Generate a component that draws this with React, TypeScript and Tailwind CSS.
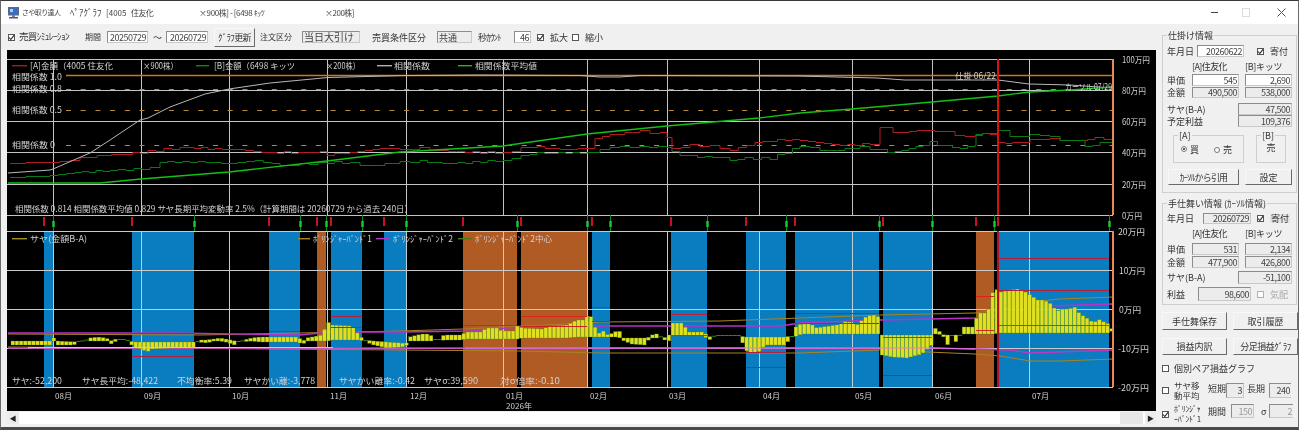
import React from "react";

type P = [number, number];
const grey: P[] = [[8,173],[50,170],[53,169],[90,153],[110,140],[140,120],[148,118],[170,107],[205,94],[229,89],[270,83],[328,77.5],[406,75.5],[480,75],[580,75.5],[600,77],[620,77],[640,75.5],[797,76],[877,78],[905,80],[998,80],[1029,84],[1070,85],[1113,88]];
const avg: P[] = [[8,183],[100,183],[141,179],[229,172],[327,161],[400,152],[503,146],[587,134],[667,126],[759,118],[800,113],[852,109],[932,102],[998,96],[1029,92],[1070,90],[1113,87]];
const redL: P[] = [[10,163],[50,162],[70,160],[90,156],[140,152],[180,147],[229,149],[270,152],[320,152],[327,154],[350,152],[380,148],[400,149],[420,148],[440,150],[465,152],[503,152],[530,146],[560,149],[587,148],[595,138],[610,134],[640,131],[660,133],[667,136],[672,148],[690,145],[710,146],[730,150],[755,142],[785,139],[800,140],[840,145],[870,143],[880,128],[893,132],[925,130],[945,132],[965,137],[975,135],[990,133],[998,143],[1020,142],[1040,138],[1060,140],[1080,140],[1095,137],[1113,141]];
const greenL: P[] = [[10,177],[50,175],[75,172],[110,170],[150,168],[160,162],[190,161],[229,163],[255,160],[280,165],[300,164],[327,162],[350,162],[370,166],[400,161],[420,161],[450,163],[503,160],[530,153],[587,152],[600,148],[620,146],[640,147],[667,146],[672,151],[680,155],[690,156],[720,157],[730,160],[745,158],[770,158],[800,146],[810,148],[830,150],[860,147],[880,150],[895,152],[930,142],[945,146],[960,148],[975,145],[976,134],[990,132],[998,131],[1010,136],[1030,135],[1040,134],[1060,140],[1080,140],[1085,146],[1100,143],[1113,150]];
const mUp: P[] = [[8,333],[175,333],[300,335],[330,332],[400,332],[470,331],[520,327],[585,325],[600,326],[700,326],[780,326],[800,323],[880,320],[930,319],[975,318],[998,315],[1030,310],[1050,306],[1113,304]];
const mLo: P[] = [[8,348],[400,348],[585,348],[800,348],[930,348],[975,349],[1010,350],[1030,353],[1113,350]];
const oUp: P[] = [[8,334],[200,335],[400,331],[463,329],[585,323],[600,322],[720,321],[800,318],[880,315],[975,313],[1000,310],[1030,302],[1060,299],[1113,297]];
const oLo: P[] = [[8,347],[400,350],[520,351],[600,353],[800,353],[880,350],[975,354],[1000,356],[1030,361],[1060,361],[1113,359]];
const center: P[] = [[28,347.5],[333,347.5]];
const center2: P[] = [[465,348],[585,348],[800,348],[930,348],[975,349]];

const blue = [[44,53],[132,194],[269,300],[331,362],[384,406],[592,610],[671,707],[746,786],[795,879],[883,932],[998,1109]];
const orange = [[317,326],[463,517],[521,587],[976,994]];
const ups = [44,132,269,317,331,384,463,521,592,671,746,795,883,976,998];
const downs = [53,194,300,326,362,406,517,587,610,707,786,879,932,994,1109];
const vgrid = [53,141,229,327,406,503,587,667,759,852,932,1029];
const steps: [number, number, number, string][] = [[132,194,333,"#b02038"],[132,194,356,"#b02038"],[269,300,331,"#b02038"],[331,362,316,"#b02038"],[331,362,327,"#c02030"],[463,517,325,"#e02020"],[521,587,316,"#e02020"],[521,587,326,"#d02020"],[592,610,307,"#c02030"],[592,610,321,"#c02030"],[671,707,314,"#c02030"],[671,707,335,"#d03020"],[746,786,367,"#b02038"],[746,786,352,"#b02038"],[795,879,313,"#b02038"],[795,879,323,"#c02030"],[883,932,337,"#d03020"],[883,932,375,"#a82038"],[976,994,296,"#e02020"],[976,994,330,"#e02020"],[998,1109,258,"#b02038"],[998,1109,290,"#b02038"],[998,1109,325,"#e03020"]];

const K: [number, number, number][] = [[11,341,345],[48,341,345],[52,338,341],[56,341,345],[72,342,345],[76,341,342],[84,340,341],[88,338,341],[96,337,341],[104,338,341],[108,340,341],[110,341,345],[114,339,341],[124,339,341],[128,341,343],[132,342,347],[140,342,349],[145,342,352],[150,342,349],[170,342,348],[192,342,347],[196,341,341],[198,340,342],[205,340,343],[212,339,341],[218,338,341],[224,339,342],[233,341,345],[238,341,342],[250,338,341],[258,337,342],[297,337,342],[300,342,345],[305,338,341],[320,335,341],[326,322,341],[330,325,340],[350,326,340],[357,335,340],[362,340,341],[372,341,345],[385,342,348],[400,343,347],[404,344,346],[408,337,341],[420,334,341],[428,334,341],[432,339,341],[438,339,341],[442,335,340],[460,335,340],[464,332,339],[480,332,339],[484,328,339],[495,328,339],[500,331,339],[512,331,339],[516,325,339],[520,328,338],[540,329,338],[550,326,338],[565,325,338],[575,320,337],[583,320,337],[587,312,337],[591,321,337],[596,335,337],[600,329,337],[604,335,337],[612,333,337],[617,329,337],[620,338,340],[630,338,344],[643,338,345],[648,337,338],[653,333,338],[660,337,338],[666,338,342],[671,323,336],[682,323,336],[685,332,336],[702,332,336],[707,337,340],[715,335,336],[737,335,336],[742,337,345],[746,337,353],[753,337,353],[758,337,351],[763,337,345],[783,337,345],[790,336,337],[795,325,336],[800,324,334],[810,324,334],[812,328,334],[820,327,334],[835,325,334],[845,321,334],[855,325,334],[865,316,334],[873,315,334],[877,317,334],[880,335,355],[890,335,357],[905,335,358],[920,335,354],[930,335,345],[933,328,334],[937,331,334],[942,335,337],[946,335,345],[950,335,336],[953,335,343],[958,335,336],[962,327,334],[972,327,334],[976,313,334],[986,313,334],[988,305,334],[992,288,334],[999,292,333],[1008,290,333],[1016,289,333],[1022,291,333],[1030,296,333],[1036,300,333],[1042,300,333],[1048,303,333],[1055,311,333],[1062,309,333],[1068,309,333],[1072,306,333],[1078,314,333],[1085,318,333],[1092,323,333],[1096,319,333],[1102,322,333],[1107,324,333],[1110,329,331]];

function interp(x: number) {
  for (let i = 0; i < K.length - 1; i++) {
    const a = K[i], b = K[i + 1];
    if (x >= a[0] && x <= b[0]) {
      const t = (x - a[0]) / (b[0] - a[0] || 1);
      return [a[1] + (b[1] - a[1]) * t, a[2] + (b[2] - a[2]) * t];
    }
  }
  return [340, 341];
}
const bars: { x: number; t: number; b: number }[] = [];
for (let x = 11; x < 1113; x += 4.1) {
  const [t, b] = interp(x);
  bars.push({ x, t, b });
}

const pts = (p: P[]) => p.map((q) => q.join(",")).join(" ");
function jag(p: P[], amp: number) {
  const out: P[] = [];
  for (let i = 0; i < p.length - 1; i++) {
    const [x0, y0] = p[i], [x1, y1] = p[i + 1];
    const n = Math.max(1, Math.floor((x1 - x0) / 7));
    for (let k = 0; k < n; k++) {
      const x = x0 + ((x1 - x0) * k) / n;
      const y = Math.round(y0 + ((y1 - y0) * k) / n + Math.sin(x * 0.37) * amp) + 0.5;
      out.push([x, y]);
      out.push([x + (x1 - x0) / n, y]);
    }
  }
  return out;
}

function L({ x, y, w, children, c = "#d2d2d2", s = 8.5 }: { x: number; y: number; w?: number; children: React.ReactNode; c?: string; s?: number }) {
  return (
    <text x={x} y={y} fill={c} fontSize={s} textLength={w} lengthAdjust={w ? "spacingAndGlyphs" : undefined} dominantBaseline="central">
      {children}
    </text>
  );
}

function Chart() {
  const hs = [59, 90, 121, 152, 184, 215];
  const ls = [231, 270, 309, 348, 387];
  return (
    <svg viewBox="7 50 1149 361" className="block h-[361px] w-[1149px] bg-black">
      {blue.map(([a, b]) => <rect key={a} x={a} y={231} width={b - a} height={156} fill="#0a7cc0" />)}
      {orange.map(([a, b]) => <rect key={a} x={a} y={231} width={b - a} height={156} fill="#b05a24" />)}
      {hs.map((y) => <line key={y} x1={7} x2={1113} y1={y + 0.5} y2={y + 0.5} stroke="#c4c4c4" strokeWidth={1} />)}
      {ls.map((y) => <line key={y} x1={7} x2={1113} y1={y + 0.5} y2={y + 0.5} stroke="#cacaca" strokeWidth={1} />)}
      {vgrid.map((x) => (
        <g key={x}>
          <line x1={x + 0.5} x2={x + 0.5} y1={59} y2={215} stroke="#c4c4c4" />
          <line x1={x + 0.5} x2={x + 0.5} y1={231} y2={387} stroke="#c0ccd4" />
        </g>
      ))}
      <line x1={66} x2={1113} y1={75.5} y2={75.5} stroke="#c97c1c" strokeWidth={1.4} />
      {[89, 110, 145].map((y) => <line key={y} x1={66} x2={1113} y1={y + 0.5} y2={y + 0.5} stroke="#b88a3a" strokeDasharray="5 9.7" strokeWidth={1.2} />)}
      <polyline points={pts(jag(redL, 0.7))} fill="none" stroke="#b01c24" strokeWidth={1} />
      <polyline points={pts(jag(greenL, 0.7))} fill="none" stroke="#0c7a14" strokeWidth={1} />
      <polyline points={pts(grey)} fill="none" stroke="#b8b8b8" strokeWidth={1} />
      <polyline points={pts(avg)} fill="none" stroke="#12c016" strokeWidth={1.4} />

      {ups.map((x) => <rect key={x} x={x - 1} y={217} width={2} height={9} fill="#d01020" />)}
      {downs.map((x) => (
        <g key={x}>
          <line x1={x + 0.5} x2={x + 0.5} y1={215} y2={231} stroke="#0c8a20" />
          <rect x={x - 0.7} y={221} width={2.4} height={6} fill="#18d030" />
        </g>
      ))}

      <polyline points={pts(oUp)} fill="none" stroke="#a88420" />
      <polyline points={pts(oLo)} fill="none" stroke="#a88420" />
      <polyline points={pts(mUp)} fill="none" stroke="#b832c8" strokeWidth={1.3} />
      <polyline points={pts(mLo)} fill="none" stroke="#c036c0" strokeWidth={1.3} />
      {bars.map((b) => (
        b.b - b.t > 2
          ? <rect key={b.x} x={b.x} y={b.t} width={3.7} height={b.b - b.t} fill="#e0e020" stroke="#4a8a14" strokeWidth={0.3} />
          : <rect key={b.x} x={b.x} y={b.t} width={4.1} height={1} fill="#2c8a1c" />
      ))}
      <polyline points={pts(center)} fill="none" stroke="#e0c8a8" strokeWidth={1.2} />
      <polyline points={pts(center2)} fill="none" stroke="#e078e0" strokeWidth={1} />
      {steps.map(([a, b, y, c], i) => <line key={i} x1={a} x2={b} y1={y + 0.5} y2={y + 0.5} stroke={c} strokeWidth={1} />)}

      <line x1={998} x2={998} y1={59} y2={215} stroke="#d81010" strokeWidth={2} />
      <line x1={998} x2={998} y1={231} y2={387} stroke="#b01028" strokeWidth={2} />
      <line x1={1113} x2={1113} y1={59} y2={215} stroke="#e88a58" strokeWidth={2} />
      <line x1={1113} x2={1113} y1={231} y2={387} stroke="#e88a58" strokeWidth={2} />

      <rect x={12} y={65} width={15} height={1.4} fill="#a01c20" />
      <L x={30} y={65} w={83}>[A]金額（4005 住友化</L>
      <L x={143} y={65} w={35}>×900株）</L>
      <rect x={196} y={65} width={13} height={1.4} fill="#0c8a14" />
      <L x={214} y={65} w={81}>[B]金額（6498 キッツ</L>
      <L x={326} y={65} w={34}>×200株）</L>
      <rect x={377} y={65} width={15} height={1.4} fill="#b0b0b0" />
      <L x={394} y={65} w={36}>相関係数</L>
      <rect x={458} y={65} width={14} height={1.4} fill="#12c016" />
      <L x={475} y={65} w={62}>相関係数平均値</L>
      <L x={12} y={75.5} w={50}>相関係数 1.0</L>
      <L x={12} y={87.5} w={50}>相関係数 0.8</L>
      <L x={12} y={109} w={50}>相関係数 0.5</L>
      <L x={12} y={144} w={43}>相関係数 0</L>
      <L x={955} y={75} w={41}>仕掛 06/22</L>
      <L x={1065} y={86} w={47}>カーソル 07/29</L>
      <L x={15} y={208} w={398}>相関係数 0.814 相関係数平均値 0.829 サヤ長期平均変動率 2.5%（計算期間は 20260729 から過去 240日）</L>

      <rect x={12} y={238} width={15} height={1.4} fill="#a09020" />
      <L x={30} y={238} w={57}>サヤ(金額B-A)</L>
      <rect x={298} y={238} width={12} height={1.4} fill="#a88420" />
      <L x={313} y={238} w={59}>ﾎﾞﾘﾝｼﾞｬｰﾊﾞﾝﾄﾞ1</L>
      <rect x={376} y={238} width={14} height={1.4} fill="#b832c8" />
      <L x={393} y={238} w={60}>ﾎﾞﾘﾝｼﾞｬｰﾊﾞﾝﾄﾞ2</L>
      <rect x={458} y={238} width={14} height={1.4} fill="#4a7a14" />
      <L x={475} y={238} w={77}>ﾎﾞﾘﾝｼﾞｬｰﾊﾞﾝﾄﾞ2中心</L>

      <L x={12} y={380} w={50}>サヤ:-52,200</L>
      <L x={82} y={380} w={76}>サヤ長平均:-48,422</L>
      <L x={177} y={380} w={55}>不均衡率:5.39</L>
      <L x={244} y={380} w={71}>サヤかい離:-3,778</L>
      <L x={339} y={380} w={76}>サヤかい離率:-0.42</L>
      <L x={424} y={380} w={54}>サヤσ:39,590</L>
      <L x={500} y={380} w={60}>対σ倍率:-0.10</L>

      {[["08月",55],["09月",144],["10月",232],["11月",330],["12月",410],["01月",506],["02月",590],["03月",669],["04月",763],["05月",855],["06月",935],["07月",1032]].map(([t, x]) => (
        <L key={t as string} x={x as number} y={395.5} w={17} s={8}>{t}</L>
      ))}
      <L x={506} y={405.5} w={26} s={8}>2026年</L>

      {[["100万円",59,1122,28],["80万円",90,1122,24],["60万円",121,1122,24],["40万円",152,1122,24],["20万円",184,1122,24],["0万円",215,1122,20]].map(([t, y, x, w]) => (
        <L key={t as string} x={x as number} y={y as number} w={w as number}>{t}</L>
      ))}
      {[["20万円",231,1118,27],["10万円",270,1119,26],["0万円",309,1119,22],["-10万円",348,1118,31],["-20万円",387,1118,31]].map(([t, y, x, w]) => (
        <L key={t as string} x={x as number} y={y as number} w={w as number}>{t}</L>
      ))}
    </svg>
  );
}

function Check({ on = true, dim = false }: { on?: boolean; dim?: boolean }) {
  return (
    <span className={`relative inline-block h-[7px] w-[7px] shrink-0 border bg-white ${dim ? "border-[#b0b0b0]" : "border-[#555]"}`}>
      {on && (
        <svg viewBox="0 0 7 7" className="absolute left-[-1px] top-[-1px] h-[7px] w-[7px]">
          <path d="M1 3.5 L2.8 5.5 L6 1.3" fill="none" stroke="#222" strokeWidth="1.1" />
        </svg>
      )}
    </span>
  );
}

function Field({ v, className = "", white = false, left = false }: { v: string; className?: string; white?: boolean; left?: boolean }) {
  return (
    <span className={`inline-flex shrink-0 items-center whitespace-nowrap border border-b-[#c8c8c8] border-l-[#8c8c8c] border-r-[#c8c8c8] border-t-[#8c8c8c] pr-[1px] text-[9px] leading-none tracking-[-0.5px] text-[#444] ${white ? "bg-white" : "bg-[#ececec]"} ${left ? "justify-start pl-[1px]" : "justify-end"} ${className}`}>
      {v}
    </span>
  );
}

function Btn({ children, className = "" }: { children: React.ReactNode; className?: string }) {
  return (
    <span className={`inline-flex shrink-0 items-center justify-center whitespace-nowrap border border-b-[#6a6a6a] border-l-[#f8f8f8] border-r-[#6a6a6a] border-t-[#f8f8f8] bg-[#f0f0f0] text-[9px] leading-none text-[#333] ${className}`}>
      {children}
    </span>
  );
}

function Row({ children, className = "" }: { children: React.ReactNode; className?: string }) {
  return <div className={`flex items-center text-[9px] leading-none text-[#333] ${className}`}>{children}</div>;
}

function Group({ title, className = "", children }: { title: string; className?: string; children: React.ReactNode }) {
  return (
    <div className={`relative border border-[#cfcfcf] ${className}`}>
      <span className="absolute left-[4px] top-[-6px] whitespace-nowrap bg-[#f0f0f0] px-[1px] text-[9px] leading-[11px] text-[#333]">{title}</span>
      {children}
    </div>
  );
}

function Radio({ on = false }: { on?: boolean }) {
  return (
    <span className="relative inline-block h-[6px] w-[6px] shrink-0 rounded-full border border-[#777] bg-white">
      {on && <span className="absolute left-[1px] top-[1px] h-[2px] w-[2px] rounded-full bg-[#222]" />}
    </span>
  );
}

function Right() {
  return (
    <div className="flex w-[142px] shrink-0 flex-col pl-[6px]">
      <Group title="仕掛け情報" className="mt-[11px] h-[158px] w-[135px]">
        <Row className="mt-[9px] h-[12px] pl-[4px]">
          <span className="w-[30px]">年月日</span>
          <Field white v="20260622" className="h-[12px] w-[47px]" />
          <span className="ml-[13px] mr-[6px]"><Check /></span>
          <span>寄付</span>
        </Row>
        <Row className="mt-[3px] h-[12px] pl-[29px]">
          <span className="w-[53px] tracking-[-0.6px]">[A]住友化</span>
          <span className="tracking-[-0.3px]">[B]キッツ</span>
        </Row>
        <Row className="mt-[2px] h-[12px] pl-[4px]">
          <span className="w-[25px]">単価</span>
          <Field white v="545" className="h-[12px] w-[47px]" />
          <Field white v="2,690" className="ml-[6px] h-[12px] w-[47px]" />
        </Row>
        <Row className="mt-[1px] h-[11px] pl-[4px]">
          <span className="w-[25px]">金額</span>
          <Field v="490,500" className="h-[11px] w-[47px]" />
          <Field v="538,000" className="ml-[6px] h-[11px] w-[47px]" />
        </Row>
        <Row className="mt-[5px] h-[12px] pl-[4px]">
          <span className="w-[71px]">サヤ(B-A)</span>
          <Field v="47,500" className="h-[12px] w-[54px]" />
        </Row>
        <Row className="h-[12px] pl-[4px]">
          <span className="w-[71px]">予定利益</span>
          <Field v="109,376" className="h-[12px] w-[54px]" />
        </Row>
        <Row className="mt-[8px] h-[28px] items-start pl-[10px]">
          <Group title="[A]" className="flex h-[28px] w-[71px] items-center pl-[7px]">
            <Radio on />
            <span className="ml-[3px]">買</span>
            <span className="ml-[15px]"><Radio /></span>
            <span className="ml-[3px]">売</span>
          </Group>
          <Group title="[B]" className="ml-[12px] flex h-[28px] w-[30px] items-center justify-center pb-[3px]">
            <span>売</span>
          </Group>
        </Row>
        <Row className="mt-[6px] h-[16px] pl-[5px]">
          <Btn className="h-[16px] w-[71px] tracking-[-0.8px]">ｶｰｿﾙから引用</Btn>
          <Btn className="ml-[6px] h-[16px] w-[47px]">設定</Btn>
        </Row>
      </Group>

      <Group title="手仕舞い情報 (ｶｰｿﾙ情報)" className="mt-[10px] h-[102px] w-[135px]">
        <Row className="mt-[9px] h-[11px] pl-[4px]">
          <span className="w-[36px]">年月日</span>
          <Field v="20260729" className="h-[11px] w-[48px]" />
          <span className="ml-[6px] mr-[6px]"><Check /></span>
          <span className="bg-[#e4e4e4] px-[1px]">寄付</span>
        </Row>
        <Row className="mt-[3px] h-[12px] pl-[29px]">
          <span className="w-[53px] tracking-[-0.6px]">[A]住友化</span>
          <span className="tracking-[-0.3px]">[B]キッツ</span>
        </Row>
        <Row className="mt-[4px] h-[12px] pl-[4px]">
          <span className="w-[25px]">単価</span>
          <Field v="531" className="h-[12px] w-[47px]" />
          <Field v="2,134" className="ml-[6px] h-[12px] w-[47px]" />
        </Row>
        <Row className="mt-[1px] h-[12px] pl-[4px]">
          <span className="w-[25px]">金額</span>
          <Field v="477,900" className="h-[12px] w-[47px]" />
          <Field v="426,800" className="ml-[6px] h-[12px] w-[47px]" />
        </Row>
        <Row className="mt-[3px] h-[13px] pl-[4px]">
          <span className="w-[71px]">サヤ(B-A)</span>
          <Field v="-51,100" className="h-[13px] w-[54px]" />
        </Row>
        <Row className="mt-[3px] h-[14px] pl-[4px]">
          <span className="w-[31px]">利益</span>
          <Field v="98,600" className="h-[14px] w-[53px]" />
          <span className="ml-[6px] mr-[6px]"><Check on={false} dim /></span>
          <span className="text-[#a8a8a8]">気配</span>
        </Row>
      </Group>

      <div className="mt-[7px] flex gap-[6px]">
        <Btn className="h-[18px] w-[65px]">手仕舞保存</Btn>
        <Btn className="h-[18px] w-[65px]">取引履歴</Btn>
      </div>
      <div className="mt-[8px] flex gap-[6px]">
        <Btn className="h-[17px] w-[65px]">損益内訳</Btn>
        <Btn className="h-[17px] w-[65px] tracking-[-0.5px]">分足損益ｸﾞﾗﾌ</Btn>
      </div>
      <Row className="mt-[9px] h-[9px]">
        <Check on={false} />
        <span className="ml-[5px]">個別ペア損益グラフ</span>
      </Row>
      <Row className="mt-[8px] h-[19px]">
        <Check on={false} />
        <span className="ml-[5px] w-[27px] text-[8.5px] leading-[9.5px]">サヤ移<br />動平均</span>
        <span className="ml-[7px] w-[18px] pb-[4px]">短期</span>
        <Field v="3" className="h-[15px] w-[18px]" />
        <span className="ml-[3px] w-[19px] pb-[4px]">長期</span>
        <Field v="240" className="ml-[3px] h-[15px] w-[22px] border-r-0" />
      </Row>
      <Row className="mt-[4px] h-[20px]">
        <Check />
        <span className="ml-[5px] w-[30px] text-[8px] leading-[10px] tracking-[-0.3px]">ﾎﾞﾘﾝｼﾞｬ<br />ｰﾊﾞﾝﾄﾞ1</span>
        <span className="ml-[4px] w-[23px] pb-[6px]">期間</span>
        <Field v="150" className="mb-[6px] h-[14px] w-[23px] text-[#999]" />
        <span className="ml-[7px] w-[8px] pb-[6px]">σ</span>
        <Field v="2" className="mb-[6px] h-[14px] w-[24px] border-r-0 text-[#999]" />
      </Row>
    </div>
  );
}

export default function App() {
  return (
    <div className="h-[430px] w-[1299px] overflow-hidden border-x border-b-[3px] border-t border-x-[#6a6a6a] border-b-[#4a4a4a] border-t-[#3a3a3a] bg-[#f0f0f0] font-['Noto_Sans_CJK_JP',sans-serif] blur-[0.4px]">
      <div className="flex h-[23px] items-center bg-white pl-[7px] text-[8px] leading-none text-[#444]">
        <svg viewBox="0 0 11 12" className="h-[12px] w-[11px] shrink-0">
          <rect x="0.5" y="0.5" width="10" height="7.5" fill="#3a6cc0" stroke="#5a6a80" />
          <rect x="2" y="2" width="3" height="3" fill="#a8d0f0" />
          <rect x="4" y="8" width="3" height="2" fill="#7a8490" />
          <rect x="1" y="10" width="9" height="1.5" fill="#4a5a70" />
        </svg>
        <span className="ml-[3px] w-[48px] whitespace-nowrap text-[7px] tracking-[-0.6px]">さや取り達人</span>
        <span className="w-[36px] whitespace-nowrap text-[9px]">ﾍﾟｱｸﾞﾗﾌ</span>
        <span className="w-[25px] whitespace-nowrap">[4005</span>
        <span className="w-[68px] whitespace-nowrap tracking-[-0.6px]">住友化</span>
        <span className="w-[126px] whitespace-nowrap tracking-[-0.4px]">×900株] - [6498 ｷｯﾂ</span>
        <span className="whitespace-nowrap tracking-[-0.5px]">×200株]</span>
        <div className="ml-auto flex items-center text-[#555]">
          <span className="h-[1px] w-[7px] bg-[#444]" />
          <span className="ml-[24px] h-[9px] w-[8px] border border-[#dcdcdc]" />
          <svg viewBox="0 0 9 9" className="ml-[27px] mr-[12px] h-[9px] w-[9px]">
            <path d="M0.5 0.5 L8.5 8.5 M8.5 0.5 L0.5 8.5" stroke="#555" strokeWidth="1" />
          </svg>
        </div>
      </div>
      <div className="flex h-[403px]">
        <div className="flex w-[1155px] shrink-0 flex-col pl-[6px]">
          <div className="flex h-[26px] shrink-0 items-center pl-[1px] text-[9px] leading-none text-[#333]">
            <Check />
            <span className="ml-[4px] w-[57px] whitespace-nowrap text-[9.5px] tracking-[-0.7px]">売買ｼﾐｭﾚｰｼｮﾝ</span>
            <span className="ml-[9px] w-[16px] whitespace-nowrap text-[8px]">期間</span>
            <Field white v="20250729" className="ml-[6px] h-[12px] w-[41px]" />
            <span className="ml-[5px] w-[9px]">〜</span>
            <Field white v="20260729" className="ml-[4px] h-[12px] w-[42px]" />
            <Btn className="ml-[6px] h-[19px] w-[41px] tracking-[-0.6px]">ｸﾞﾗﾌ更新</Btn>
            <span className="ml-[5px] w-[32px] whitespace-nowrap text-[8px]">注文区分</span>
            <Field left v="当日大引け" className="ml-[10px] h-[12px] w-[58px] text-[10px] tracking-normal" />
            <span className="ml-[12px] w-[53px] whitespace-nowrap">売買条件区分</span>
            <Field left v="共通" className="ml-[12px] h-[12px] w-[35px] text-[9px] tracking-normal" />
            <span className="ml-[6px] w-[30px] whitespace-nowrap tracking-[-0.8px]">秒ｶｳﾝﾄ</span>
            <Field white v="46" className="ml-[6px] h-[12px] w-[17px]" />
            <span className="ml-[6px]"><Check /></span>
            <span className="ml-[6px] w-[20px] whitespace-nowrap">拡大</span>
            <span className="ml-[2px]"><Check on={false} /></span>
            <span className="ml-[6px] w-[20px] whitespace-nowrap">縮小</span>
          </div>
          <Chart />
          <div className="mt-[1px] flex h-[12px] shrink-0 items-stretch bg-white">
            <span className="flex w-[12px] items-center justify-center bg-[#ececec] text-[7px] leading-none text-[#222]">◀</span>
            <span className="flex-1" />
            <span className="w-[23px] bg-[#e6e6e6]" />
            <span className="w-[2px]" />
            <span className="flex w-[11px] items-center justify-center bg-[#ececec] text-[7px] leading-none text-[#222]">▶</span>
          </div>
        </div>
        <Right />
      </div>
    </div>
  );
}
